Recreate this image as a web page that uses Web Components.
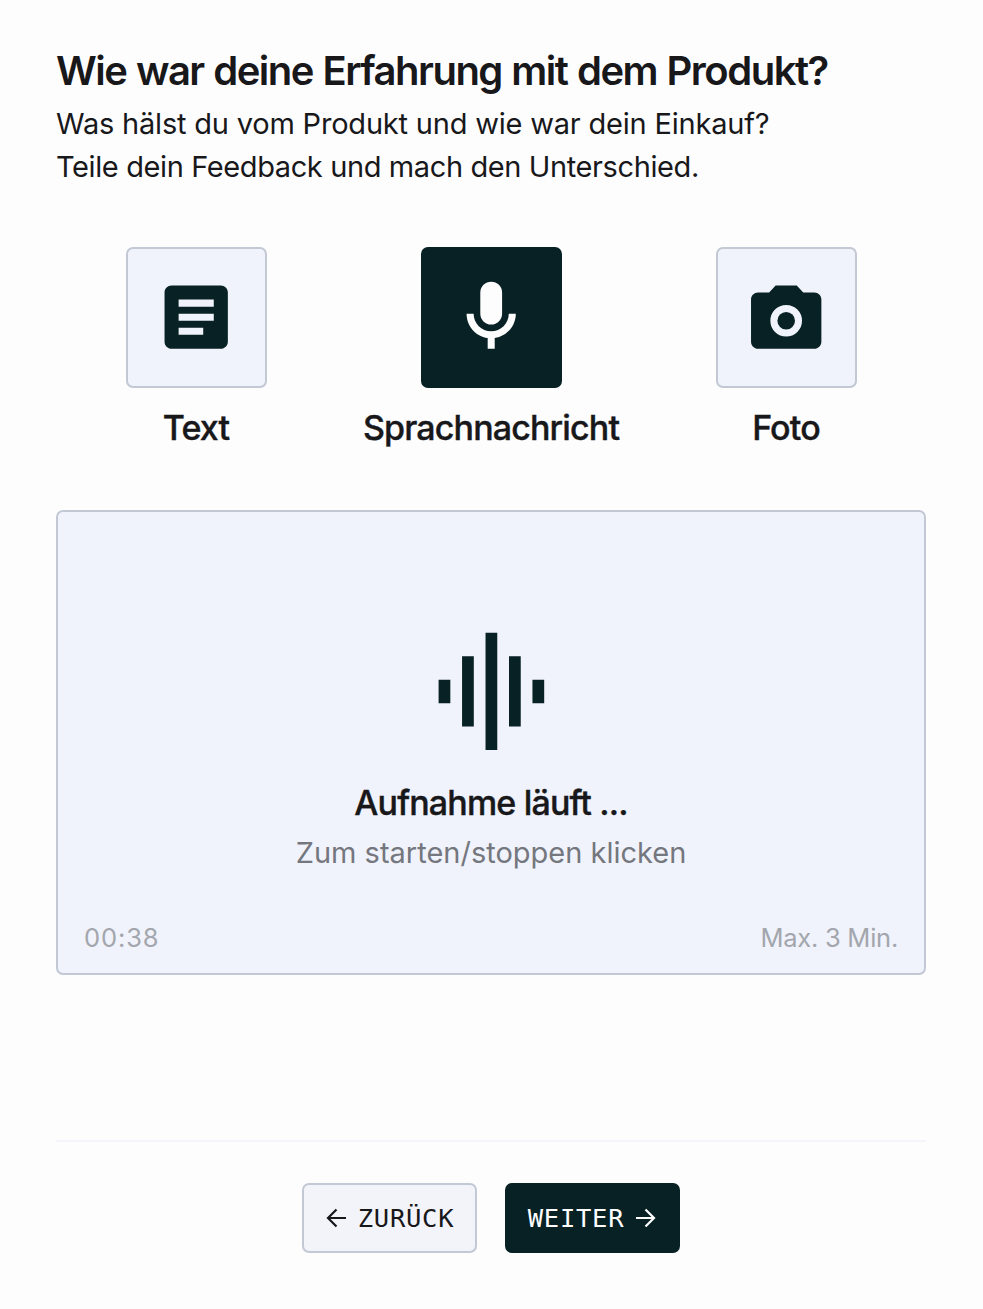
<!DOCTYPE html>
<html lang="de">
<head>
<meta charset="utf-8">
<title>Feedback</title>
<style>
  body {
    margin: 0;
    background: #fdfdfe;
    font-family: Inter, "Liberation Sans", sans-serif;
    color: #18181b;
    --dark: #082124;
    --surface: #f0f3fb;
    --line: #c2c8d4;
  }
</style>
</head>
<body>

<feedback-form>
  <form-heading slot="header">
    Wie war deine Erfahrung mit dem Produkt?
    <span slot="line1">Was hälst du vom Produkt und wie war dein Einkauf?</span>
    <span slot="line2">Teile dein Feedback und mach den Unterschied.</span>
  </form-heading>
  <option-tile slot="options" icon="text">Text</option-tile>
  <option-tile slot="options" icon="mic" active>Sprachnachricht</option-tile>
  <option-tile slot="options" icon="photo">Foto</option-tile>
  <voice-recorder time="00:38" limit="Max. 3 Min.">
    Aufnahme läuft ...
    <span slot="hint">Zum starten/stoppen klicken</span>
  </voice-recorder>
  <nav-button slot="actions" direction="back">ZURÜCK</nav-button>
  <nav-button slot="actions" direction="next" primary>WEITER</nav-button>
</feedback-form>

<script>
  const ICONS = {
    text: '<path fill-rule="evenodd" d="M5 3h14c1.1 0 2 .9 2 2v14c0 1.1-.9 2-2 2H5c-1.1 0-2-.9-2-2V5c0-1.1.9-2 2-2zM7 7v2h10V7zM7 11v2h10v-2zM7 15v2h7v-2z"/>',
    mic: '<path d="M12 14.1c1.7 0 3.1-1.4 3.1-3.1V5a3.1 3.1 0 0 0-6.2 0v6c0 1.7 1.4 3.1 3.1 3.1zM17 11c0 2.76-2.24 5-5 5s-5-2.24-5-5H5c0 3.53 2.61 6.43 6 6.92V21h2v-3.08c3.39-.49 6-3.39 6-6.92z"/>',
    photo: '<path fill-rule="evenodd" d="M4 21c-1.1 0-2-.9-2-2V7c0-1.1.9-2 2-2h3.15L9 3h6l1.85 2H20c1.1 0 2 .9 2 2v12c0 1.1-.9 2-2 2zM12 8.5a4.5 4.5 0 1 0 0 9 4.5 4.5 0 0 0 0-9z"/><circle cx="12" cy="13" r="2.5"/>',
    wave: '<path d="M7 18h2V6H7zM11 22h2V2h-2zM3 14h2v-4H3zM15 18h2V6h-2zM19 10v4h2v-4z"/>',
    back: '<path fill="none" stroke="currentColor" stroke-width="2.2" d="M21 12H3.500M11.500 3.500L3 12l8.500 8.500"/>',
    next: '<path fill="none" stroke="currentColor" stroke-width="2.2" d="M3 12h17.500M12.500 3.500L21 12l-8.500 8.500"/>'
  };

  const icon = name => `<svg viewBox="0 0 24 24" fill="currentColor" aria-hidden="true">${ICONS[name]}</svg>`;

  class FeedbackForm extends HTMLElement {
    constructor() {
      super();
      this.attachShadow({ mode: 'open' });
      this.shadowRoot.innerHTML = `
        <style>
          :host {
            display: flex;
            flex-direction: column;
            box-sizing: border-box;
            height: 1309px;
            padding: 46px 57px 56px 56px;
          }
          .options {
            display: grid;
            grid-template-columns: repeat(3, 280px);
            justify-content: space-between;
            margin: 59px 0 61px;
          }
          footer {
            display: flex;
            justify-content: center;
            gap: 28px;
            margin-top: auto;
            padding-top: 41px;
            border-top: 2px solid #f4f5fa;
          }
        </style>
        <slot name="header"></slot>
        <div class="options"><slot name="options"></slot></div>
        <slot></slot>
        <footer><slot name="actions"></slot></footer>
      `;
    }
  }

  class FormHeading extends HTMLElement {
    constructor() {
      super();
      this.attachShadow({ mode: 'open' });
      this.shadowRoot.innerHTML = `
        <style>
          :host { display: block; white-space: nowrap; }
          h1 {
            margin: 0 0 6px;
            font-size: 40px;
            font-weight: 600;
            line-height: 50px;
            letter-spacing: -1.5px;
            word-spacing: 0.9px;
          }
          p {
            margin: 0;
            font-size: 29px;
            line-height: 43px;
            letter-spacing: -0.2px;
          }
          p:last-child { letter-spacing: -0.39px; }
        </style>
        <h1><slot></slot></h1>
        <p><slot name="line1"></slot></p>
        <p><slot name="line2"></slot></p>
      `;
    }
  }

  class OptionTile extends HTMLElement {
    constructor() {
      super();
      this.attachShadow({ mode: 'open' });
      this.shadowRoot.innerHTML = `
        <style>
          :host {
            display: flex;
            flex-direction: column;
            align-items: center;
            gap: 19px;
            font-size: 34px;
            font-weight: 500;
            line-height: 42px;
            letter-spacing: -0.85px;
            white-space: nowrap;
            -webkit-text-stroke: 0.4px currentColor;
          }
          .tile {
            display: grid;
            place-items: center;
            box-sizing: border-box;
            width: 141px;
            height: 141px;
            border: 2px solid var(--line);
            border-radius: 7px;
            background: var(--surface);
            color: var(--dark);
          }
          :host([active]) .tile {
            border-color: var(--dark);
            background: var(--dark);
            color: #fdfdfe;
          }
          svg { width: 84.4px; height: 84.4px; }
        </style>
        <div class="tile">${icon(this.getAttribute('icon'))}</div>
        <span><slot></slot></span>
      `;
    }
  }

  class VoiceRecorder extends HTMLElement {
    constructor() {
      super();
      this.attachShadow({ mode: 'open' });
      this.shadowRoot.innerHTML = `
        <style>
          :host {
            display: flex;
            flex-direction: column;
            align-items: center;
            box-sizing: border-box;
            height: 465px;
            padding: 109px 26px 19px;
            border: 2px solid var(--line);
            border-radius: 7px;
            background: var(--surface);
          }
          svg { width: 140.8px; height: 140.8px; color: var(--dark); }
          .status {
            margin-top: 20px;
            font-size: 34px;
            font-weight: 500;
            line-height: 42px;
            letter-spacing: -0.83px;
            -webkit-text-stroke: 0.4px currentColor;
          }
          .hint {
            margin-top: 8px;
            font-size: 29px;
            line-height: 42px;
            color: #75777f;
          }
          .info {
            display: flex;
            justify-content: space-between;
            align-self: stretch;
            margin-top: auto;
            font-size: 25.5px;
            line-height: 32px;
            letter-spacing: -0.25px;
            color: #a3a6ad;
          }
          .time { letter-spacing: 0.9px; }
        </style>
        ${icon('wave')}
        <div class="status"><slot></slot></div>
        <div class="hint"><slot name="hint"></slot></div>
        <div class="info">
          <span class="time">${this.getAttribute('time')}</span>
          <span>${this.getAttribute('limit')}</span>
        </div>
      `;
    }
  }

  class NavButton extends HTMLElement {
    constructor() {
      super();
      this.attachShadow({ mode: 'open' });
      const direction = this.getAttribute('direction');
      const label = '<span><slot></slot></span>';
      this.shadowRoot.innerHTML = `
        <style>
          :host { display: block; }
          button {
            display: flex;
            align-items: center;
            justify-content: center;
            gap: 9px;
            box-sizing: border-box;
            width: 175px;
            height: 70px;
            padding: 0;
            border: 2px solid var(--line);
            border-radius: 7px;
            background: #f2f4fa;
            color: #18181b;
            font: 25.5px "DejaVu Sans Mono", monospace;
            letter-spacing: 0.75px;
          }
          :host([primary]) button {
            border-color: var(--dark);
            background: var(--dark);
            color: #fdfdfe;
          }
          svg { width: 24px; height: 24px; }
        </style>
        <button>${direction === 'back' ? icon('back') + label : label + icon('next')}</button>
      `;
    }
  }

  customElements.define('feedback-form', FeedbackForm);
  customElements.define('form-heading', FormHeading);
  customElements.define('option-tile', OptionTile);
  customElements.define('voice-recorder', VoiceRecorder);
  customElements.define('nav-button', NavButton);
</script>
</body>
</html>
